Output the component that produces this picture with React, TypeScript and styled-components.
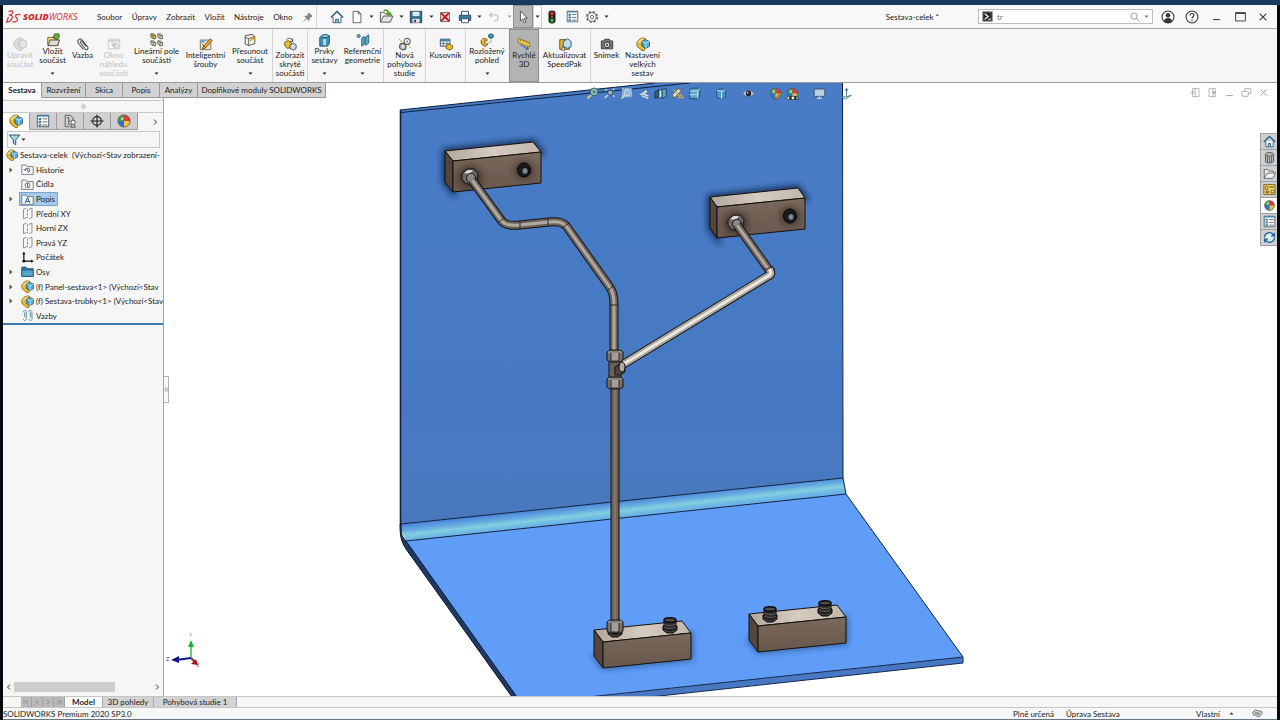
import React, { useState } from 'react';
import styled, { createGlobalStyle, css } from 'styled-components';

const Global = createGlobalStyle`
  *, *::before, *::after { box-sizing: border-box; }
  body { margin: 0; background: #05080c; }
  button, input { font: inherit; color: inherit; margin: 0; padding: 0; border: 0; background: none; }
  svg { display: block; flex: none; }
`;

const Shell = styled.div`
  min-height: 100vh;
  display: flex;
  flex-direction: column;
  padding: 0 3px;
  background: #05080c;
  color: #1c1c1c;
  font: 8px/10px Lato, 'Open Sans', sans-serif;
`;
const TopStrip = styled.div`
  height: 5px;
  margin: 0 -3px;
  background: #1b3a61;
`;

/* ---------- title bar ---------- */
const TitleBar = styled.header`
  height: 24px;
  padding-right: 3px;
  display: flex;
  align-items: stretch;
  background: #f8f8f8;
  border-bottom: 1px solid #a5a2a8;
`;
const Logo = styled.div`
  width: 90px;
  padding-left: 3px;
  display: flex;
  align-items: center;
  gap: 2px;
  color: #d0312d;
  font: italic 9px/12px 'Open Sans', sans-serif;
  b { font-weight: 800; }
`;
const MenuNav = styled.nav`
  width: 224px;
  padding: 1px 3px 0 4px;
  display: flex;
  align-items: center;
  justify-content: space-between;
  border-right: 1px solid #d4d4d4;
`;
const MenuButton = styled.button`
  white-space: nowrap;
`;
const QuickBar = styled.div`
  display: flex;
  padding-left: 10px;
`;
const QuickButton = styled.button<{ $w: number; $on?: boolean; $boxed?: boolean }>`
  width: ${(p) => p.$w}px;
  display: flex;
  align-items: center;
  justify-content: center;
  ${(p) => p.$on && css`background: #b4b4b4; border: 1px solid #8f8f8f;`}
  ${(p) => p.$boxed && css`background: #fff; border: 1px solid #ccc;`}
`;
const DocTitle = styled.div`
  flex: 1;
  padding: 1px 39px 0 0;
  display: flex;
  align-items: center;
  justify-content: flex-end;
`;
const SearchBox = styled.label`
  flex: 0 1 175px;
  height: 15px;
  margin-top: 4px;
  padding: 0 3px;
  display: flex;
  align-items: center;
  gap: 4px;
  background: #fff;
  border: 1px solid #bdbdbd;
`;
const SearchInput = styled.input`
  flex: 1;
  min-width: 0;
  outline: 0;
  color: #777;
`;
const WindowButtons = styled.div`
  display: flex;
  align-items: center;
  padding-left: 3px;
`;

/* ---------- ribbon ---------- */
const Ribbon = styled.div`
  height: 54px;
  display: flex;
  background: #f6f6f6;
  border-bottom: 1px solid #9d9a9f;
`;
const Tool = styled.button<{ $w: number; $sep?: boolean; $on?: boolean; $off?: boolean; $menu?: boolean }>`
  width: ${(p) => p.$w}px;
  padding-top: ${(p) => (p.$menu ? 4 : 8)}px;
  display: flex;
  flex-direction: column;
  align-items: center;
  white-space: nowrap;
  border-right: 1px solid ${(p) => (p.$sep ? '#d3d3d3' : 'transparent')};
  line-height: 9px;
  ${(p) => p.$off && css`color: #c0c0c0;`}
  ${(p) => p.$on && css`background: #b3b3b3; border: 1px solid #8e8e8e; padding-top: 7px;`}
`;
const ToolLabel = styled.span`
  white-space: pre-line;
  text-align: center;
`;
const ToolCaret = styled.span`
  margin-top: 7px;
`;

/* ---------- workspace ---------- */
const Workspace = styled.main`
  flex: 1;
  display: grid;
  grid-template-columns: 161px minmax(0, 1fr);
  grid-template-rows: 15px minmax(0, 1fr);
  background: #fff;
`;
const RibbonTabs = styled.div`
  grid-column: 1 / -1;
  grid-row: 1;
  z-index: 2;
  justify-self: start;
  display: flex;
`;
const RibbonTab = styled.button<{ $w: number; $on?: boolean }>`
  width: ${(p) => p.$w}px;
  white-space: nowrap;
  background: ${(p) => (p.$on ? '#fafafa' : '#d2d2d2')};
  border-right: 1px solid #999;
  border-bottom: 1px solid ${(p) => (p.$on ? '#fafafa' : '#999')};
  font-weight: ${(p) => (p.$on ? 700 : 400)};
`;
const Panel = styled.aside`
  grid-column: 1;
  grid-row: 2;
  display: flex;
  flex-direction: column;
  background: #f6f6f6;
  border-right: 1px solid #a3a3a3;
`;
const Grip = styled.div`
  height: 13px;
  margin-top: 2px;
  display: flex;
  align-items: center;
  justify-content: center;
  border-top: 1px solid #c9c9c9;
  border-bottom: 1px solid #c9c9c9;
`;
const PanelTabs = styled.div`
  height: 17px;
  display: flex;
`;
const PanelTab = styled.button<{ $on?: boolean }>`
  width: 27px;
  display: flex;
  align-items: center;
  justify-content: center;
  background: ${(p) => (p.$on ? '#fff' : '#cfcfcf')};
  border-right: 1px solid #9b9b9b;
  border-bottom: 1px solid ${(p) => (p.$on ? '#fff' : '#9b9b9b')};
`;
const PanelMore = styled.button`
  flex: 1;
  padding-left: 10px;
  display: flex;
  align-items: center;
  justify-content: center;
`;
const FilterBox = styled.label`
  height: 17px;
  margin: 1px 3px 0 4px;
  display: flex;
  align-items: center;
  border: 1px solid #c8c8c8;
  input { flex: 1; min-width: 0; outline: 0; }
`;
const Tree = styled.ul`
  height: 177px;
  margin: 0;
  padding: 0;
  list-style: none;
  display: grid;
  grid-template-rows: repeat(12, 1fr);
  border-bottom: 2px solid #3a7bb5;
`;
const TreeRow = styled.li<{ $root?: boolean }>`
  min-width: 0;
  display: flex;
  align-items: center;
  overflow: hidden;
  padding-left: ${(p) => (p.$root ? 1 : 4)}px;
`;
const Twisty = styled.span`
  width: 12px;
  flex: none;
  padding-left: 2px;
`;
const TreeItem = styled.button<{ $on?: boolean }>`
  height: 14px;
  padding: 0 2px 0 1px;
  display: flex;
  align-items: center;
  gap: 2px;
  white-space: pre;
  border: 1px solid ${(p) => (p.$on ? '#7ba5cb' : 'transparent')};
  background: ${(p) => (p.$on ? '#a5cbea' : 'none')};
`;
const PanelScroll = styled.div`
  height: 10px;
  margin-top: auto;
  margin-bottom: 4px;
  display: flex;
  align-items: center;
  gap: 3px;
  padding: 0 3px;
`;
const Track = styled.div`
  flex: 1;
  height: 10px;
`;
const Thumb = styled.div`
  width: 73%;
  height: 10px;
  background: #cdcdcd;
`;
const Viewport = styled.section`
  grid-column: 2;
  grid-row: 1 / -1;
  position: relative;
  min-height: 0;
  overflow: hidden;
  background: #fff;
`;
const Scene = styled.svg`
  width: 100%;
  height: auto;
`;
const HeadsUp = styled.div`
  position: absolute;
  top: 4px;
  left: 37.75%;
  display: flex;
  align-items: center;
`;
const HudButton = styled.button<{ $gap?: boolean }>`
  width: 17px;
  margin-left: ${(p) => (p.$gap ? 10 : 0)}px;
  display: flex;
  justify-content: center;
`;
const DocButtons = styled.div`
  position: absolute;
  top: 4px;
  right: 5px;
  display: flex;
`;
const TaskPane = styled.div`
  position: absolute;
  top: 50px;
  right: 0;
  width: 17px;
  border: 1px solid #a0a0a0;
  border-right: 0;
`;
const TaskTab = styled.button<{ $on?: boolean }>`
  width: 16px;
  height: 16px;
  display: flex;
  align-items: center;
  justify-content: center;
  background: ${(p) => (p.$on ? '#fff' : '#cdd0d3')};
  border-bottom: 1px solid #a0a0a0;
  &:last-child { border-bottom: 0; height: 15px; }
`;
const Splitter = styled.div`
  position: absolute;
  left: 0;
  top: 293px;
  width: 5px;
  height: 27px;
  display: flex;
  align-items: center;
  justify-content: center;
  border: 1px solid #b5b5b5;
  border-left: 0;
  background: #f8f8f8;
`;

/* ---------- footer ---------- */
const SheetTabs = styled.div`
  height: 12px;
  display: flex;
  background: #f6f6f6;
  border-top: 1px solid #c6c6c6;
  border-bottom: 1px solid #c6c6c6;
  padding-left: 18px;
`;
const StepButton = styled.button`
  width: 11px;
  display: flex;
  align-items: center;
  justify-content: center;
  background: #b9b9b9;
  border-right: 1px solid #a3a3a3;
`;
const SheetTab = styled.button<{ $w: number; $on?: boolean }>`
  width: ${(p) => p.$w}px;
  line-height: 9px;
  white-space: nowrap;
  background: ${(p) => (p.$on ? '#fff' : '#d3d3d3')};
  border-right: 1px solid #aaa;
  font-weight: ${(p) => (p.$on ? 700 : 400)};
`;
const StatusBar = styled.footer`
  height: 12px;
  display: flex;
  align-items: center;
  background: #f6f7f8;
  border-bottom: 1px solid #6a7686;
`;
const StatusText = styled.span<{ $w?: number }>`
  ${(p) => (p.$w ? css`width: ${p.$w}px;` : css`flex: 1;`)}
`;

/* ---------- icons ---------- */
const Svg = ({ s = 14, children }: { s?: number; children: React.ReactNode }) => (
  <svg width={s} height={s} viewBox="0 0 16 16" fill="none" aria-hidden="true">{children}</svg>
);
const Caret = ({ c = '#222' }: { c?: string }) => (
  <svg width="5" height="3" viewBox="0 0 5 3" aria-hidden="true"><path d="M0.5 0.5h4L2.5 2.8z" fill={c} /></svg>
);
const Chevron = ({ left }: { left?: boolean }) => (
  <svg width="5" height="8" viewBox="0 0 5 8" fill="none" stroke="#333" aria-hidden="true">
    <path d={left ? 'M4 1.5L1.5 4L4 6.5' : 'M1 1.5L3.5 4L1 6.5'} />
  </svg>
);
const Dot = () => (
  <svg width="5" height="5" viewBox="0 0 5 5" aria-hidden="true"><circle cx="2.5" cy="2.5" r="1.6" fill="#fff" stroke="#888" strokeWidth=".8" /></svg>
);
const PartShapes = () => (
  <>
    <path d="M.8 6.500L4 2.500 8 1l3 1-3.500 2.500L6 9.500l4 3.500v2L7 15.500 1.500 11z" fill="#e9bd33" stroke="#7a5a10" strokeWidth=".9" />
    <path d="M2.500 6.500l3-3L9 2" stroke="#fff0a8" strokeWidth="1.200" />
    <path d="M7 5l4-2 4.500 2v5.500L11.500 13 7 10.500z" fill="#4fa9d6" stroke="#1c5878" strokeWidth=".9" />
    <path d="M7 5l4.300 1.800L15.500 5M11.300 6.800V13" stroke="#d9f1fb" strokeWidth=".9" />
  </>
);
const Folder = () => <path d="M1 2.5h5l1.5 2H15v9.500H1z" fill="#fbfbfb" stroke="#5b6670" />;
const Ball = ({ r = 6 }: { r?: number }) => (
  <>
    <circle cx="8" cy="8" r={r} fill="#3273d6" />
    <path d={`M8 8V${8 - r}A${r} ${r} 0 0 0 ${8 - r} 8z`} fill="#3da646" />
    <path d={`M8 8V${8 - r}A${r} ${r} 0 0 1 ${8 + r} 8z`} fill="#e03c31" />
    <path d={`M8 8H${8 + r}A${r} ${r} 0 0 1 8 ${8 + r}z`} fill="#f0c53a" />
    <circle cx="8" cy="8" r={r} stroke="#5b4a3c" strokeWidth=".8" />
    <circle cx="6" cy="5.500" r="1.500" fill="#fff" opacity=".6" />
  </>
);
const art: Record<string, React.ReactNode> = {
  home: <><path d="M3.500 8v6.500h9V8" fill="#fff" stroke="#234a60" /><path d="M1 8.500L8 1.800l7 6.700" stroke="#1f5b7c" strokeWidth="1.600" /><path d="M6.500 14.500v-4h3v4" fill="#8cc6dd" stroke="#234a60" /></>,
  page: <path d="M3.500 1.500h6l3 3v10h-9zM9.500 1.500v3h3" fill="#fff" stroke="#555" />,
  open: <><path d="M1.500 14V3.500h4l1.500 2h6V8" fill="#f5f0df" stroke="#555" /><path d="M1.500 14L5 7.500h10L12 14z" fill="#e4e4e4" stroke="#555" /><path d="M5 1.500c3-1 5 0 5.500 3.500M8 4l2.600 2.500L12.500 3.600" stroke="#4b9a25" strokeWidth="1.700" /></>,
  save: <><path d="M1.500 1.500h13v13h-13z" fill="#2f6f8c" stroke="#1c3f50" /><path d="M4 2h8v5H4z" fill="#dcebf1" /><path d="M4 10h8v4.500H4z" fill="#e5e5e5" /><path d="M6 11h2v3H6z" fill="#333" /></>,
  del: <><path d="M2 2h12v12H2z" fill="#d9d9d9" stroke="#555" /><path d="M2.500 2.500l11 11M13.500 2.500l-11 11" stroke="#c81919" strokeWidth="2.400" /></>,
  print: <><path d="M4 6V1.500h8V6" fill="#fff" stroke="#345" /><path d="M1.500 6h13v6h-13z" fill="#3c7d9b" stroke="#1d4457" /><path d="M4 10h8v4.500H4z" fill="#fff" stroke="#345" /></>,
  undo: <path d="M5 3L2 6l3 3M2 6h7a4 3.800 0 0 1 0 7.500H7" stroke="#c6c6c6" strokeWidth="1.600" />,
  cursor: <path d="M5 1l8 8.500H9.300l2 4.500-1.800.8-2-4.500L5 12.500z" fill="#fff" stroke="#444" />,
  traffic: <><rect x="4" y=".500" width="8" height="15" rx="3.500" fill="#222" /><circle cx="8" cy="4" r="2.200" fill="#d8342a" /><circle cx="8" cy="8" r="1.500" fill="#6b5a20" /><circle cx="8" cy="12" r="2.200" fill="#33a447" /></>,
  list: <><path d="M1.500 1.500h13v13h-13z" fill="#fff" stroke="#3b5567" /><path d="M1.500 1.500h13v1.500h-13z" fill="#3a7fa5" /><path d="M3 4.500h3v2.500H3zM3 8h3v2.500H3zM3 11.500h3v2H3z" fill="#3a7fa5" /><path d="M7.500 5.500H13M7.500 9H13M7.500 12.500H13" stroke="#555" /></>,
  gear: <><circle cx="8" cy="8" r="6" stroke="#666" strokeWidth="1.800" strokeDasharray="2.800 1.912" /><circle cx="8" cy="8" r="4.900" fill="#f8f8f8" stroke="#666" /><circle cx="8" cy="8" r="1.900" stroke="#666" /></>,
  pin: <path d="M10 1.500l4.500 4.500-1.500.8-2.500 2.400-.5 3L4 6.500l3-.5L9.300 3.300zM6.500 9.500L2 14" fill="#888" stroke="#777" strokeWidth="1.200" />,
  user: <><circle cx="8" cy="8" r="6.800" fill="#fff" stroke="#333" strokeWidth="1.200" /><circle cx="8" cy="6" r="2.600" fill="#333" /><path d="M3.500 13c0-5 9-5 9 0-2 2.300-7 2.300-9 0z" fill="#333" /></>,
  help: <><circle cx="8" cy="8" r="6.800" stroke="#333" strokeWidth="1.200" /><path d="M5.800 6.300c0-3 4.500-3 4.500-.2 0 1.700-2.300 1.700-2.300 3.600M8 11v1.600" stroke="#333" strokeWidth="1.300" /></>,
  min: <path d="M3 12.500h10" stroke="#333" strokeWidth="1.500" />,
  max: <><path d="M2 3.500h12v10H2z" stroke="#333" strokeWidth="1.100" /><path d="M2 3.800h12" stroke="#333" strokeWidth="1.800" /></>,
  close: <path d="M3.500 3.500l9 9M12.500 3.500l-9 9" stroke="#333" strokeWidth="1.400" />,
  prompt: <><path d="M1 1h14v14H1z" fill="#2a2a2a" stroke="#999" strokeWidth="1.500" /><path d="M4 4l5 4-5 4M9 12h4" stroke="#fff" strokeWidth="1.600" /></>,
  lens: <path d="M10.300 10.300L15 15M6.500 11.500a5 5 0 1 1 0-10 5 5 0 0 1 0 10z" stroke="#888" strokeWidth="1.300" />,
  part: <PartShapes />,
  partOff: <><path d="M.8 6.500L4 2.500 8 1l3 1-3.500 2.500L6 9.500l4 3.500v2L7 15.500 1.500 11z" fill="#dcdcdc" stroke="#c4c4c4" /><path d="M7 5l4-2 4.500 2v5.500L11.500 13 7 10.500z" fill="#e6e6e6" stroke="#bdbdbd" /></>,
  insert: <><path d="M2 5h7l1 2h4v7H2z" fill="#f0dc82" stroke="#6b5a1a" /><path d="M2.500 14.500l2-6.500h11l-2.500 6.500z" fill="#dcdccf" stroke="#444" /><path d="M8 5l2-4h5v4l-3 2z" fill="#62b544" stroke="#2c6018" /></>,
  clip: <path d="M2 4.500c1.500-3 4-2.500 5-1l6.500 8c1.200 2-1.500 4-3 2.200L5 6.500C4 5 6 3.800 7 5l4.500 5.800M2 4.500c-.5 1.500 0 2 1 3.200l5.500 6.500" stroke="#555" strokeWidth="1.200" />,
  preview: <><path d="M1.500 2.500h13v11h-13z" stroke="#c6c6c6" /><path d="M1.500 4.500h13" stroke="#c6c6c6" strokeWidth="1.500" /><path d="M4 7l5-1 2 4-4 2z" fill="#d4d4d4" /><circle cx="10.500" cy="10" r="2.500" stroke="#bbb" /></>,
  pattern: <>{[[1, 1], [9, 1], [1, 9], [9, 9]].map(([x, y], i) => <g key={i}><path d={`M${x} ${y}h3l2.500 2v3.500h-3l-2.500-2z`} fill={i ? '#e2e2cf' : '#e8c53c'} stroke="#4a4a3a" strokeWidth=".9" /><path d={`M${x} ${y}l2.500 2h3M${x + 2.5} ${y + 2}v3.500`} stroke="#4a4a3a" strokeWidth=".8" /></g>)}</>,
  smart: <><path d="M1.500 3.500h12v11h-12z" fill="#f3e6bd" stroke="#666" /><path d="M1.500 3.500h5v3h-5z" fill="#6ea8c7" /><path d="M4 12l9-10 2 2-8 9-3 1z" fill="#e6a92e" stroke="#6b4a10" strokeWidth=".9" /><path d="M4 8l3 4" stroke="#444" /></>,
  move: <><path d="M2.500 3l8-1.500 3 2.500v8l-7 2.500-4-2z" fill="#f2f0e6" stroke="#444" /><path d="M2.500 5l4 1.500 7-2.500M6.500 6.500v8" stroke="#555" /><path d="M8 9l5-4M13 5v3M13 5h-3" stroke="#cf8b12" strokeWidth="1.400" /></>,
  hidden: <><path d="M4 3c3-3 7-1 7 1.500M11 2v3H8" stroke="#333" /><path d="M2 6l4-2 4 3-1 5-4 1-3-3z" fill="#e8b92e" stroke="#6d5010" /><path d="M8 9l4-2 3 2v4l-3 2-4-2z" fill="#d4dbe2" stroke="#445" /></>,
  feature: <><path d="M2 5l3-2h8v9l-2 3H2z" fill="#3f8fb8" stroke="#1d516d" /><path d="M6 7h3v7H6z" fill="#b9e0f0" /><ellipse cx="8" cy="3.500" rx="4" ry="1.800" fill="#91c8e0" stroke="#1d516d" /></>,
  geometry: <><circle cx="3" cy="3.500" r="1.800" fill="#63b2d8" stroke="#205d7e" /><path d="M6.500 6l3-2v9l-3 2zM11 4.500l3.500-2.500v9.500L11 14z" fill="#5fadd3" stroke="#205d7e" /></>,
  motion: <><circle cx="10.500" cy="5" r="3.500" fill="#f6f6f6" stroke="#666" strokeWidth="1.300" /><circle cx="10.500" cy="5" r="1" fill="#777" /><circle cx="5.500" cy="11" r="3.700" fill="#bbb" stroke="#555" strokeWidth="1.300" /><circle cx="5.500" cy="11" r="1.200" fill="#fff" /><path d="M1 2l4 4M12 10l3 3" stroke="#bb8a30" /></>,
  bom: <><path d="M1.500 2.500h11v8h-11z" fill="#eef7fb" stroke="#345" /><path d="M1.500 2.500h11v2.500h-11z" fill="#3d82a8" /><path d="M5 5v5.500M9 5v5.500M2 7.500h10" stroke="#567" strokeWidth=".9" /><path d="M8 10l4-2 3.500 2v3L12 15l-4-2z" fill="#e8b92e" stroke="#7a5a10" /></>,
  explode: <><path d="M1 9l3-3 4 1v2H5.500v3l3.500 1-3 2.500-4-2.500z" fill="#e8b92e" stroke="#7a5a10" /><path d="M10 2l2-1 3 1v3l-2 1-3-1z" fill="#4c93c4" stroke="#1b4c6d" /><path d="M12.500 6v4.500L8 12" stroke="#777" strokeDasharray="1.500 1" /></>,
  instant: <><path d="M1.500 1.500l13 5v5l-13-5z" fill="#f0cd54" stroke="#80620f" strokeWidth=".8" /><path d="M4 3v2M7 4v2M10 5v2M12.500 6v2" stroke="#80620f" strokeWidth=".8" /><path d="M4 9l9 5M13 14l-3.500-.2M13 14l-1.500-3" stroke="#3979a0" strokeWidth="1.300" /></>,
  speedpak: <><path d="M2 3h7v4l4 1v6H2z" fill="#e8b92e" stroke="#5e4709" /><path d="M6 5l5-3 4 3v6l-4 2-5-2z" fill="#b9dff0" stroke="#1c5878" /><path d="M4 15l2-5 2 5z" fill="#fff" stroke="#333" strokeWidth=".8" /></>,
  camera: <><path d="M1.500 4.500h3l1-2h5l1 2h3v9h-13z" fill="#777" stroke="#333" /><circle cx="8" cy="9" r="3.300" fill="#ddd" stroke="#222" /><circle cx="8" cy="9" r="1.300" fill="#444" /></>,
  tree: <><path d="M2.500 1.500h6l3 3v3M2.500 1.500v13h5" stroke="#555" /><path d="M4.500 4h2v8h2M6.500 8h2" stroke="#555" /><circle cx="11.500" cy="9.500" r="2.500" fill="#fff" stroke="#444" /><path d="M10 12l-1 3h5l-1-3" stroke="#444" /></>,
  target: <><circle cx="8" cy="8" r="5" stroke="#222" strokeWidth="1.300" /><path d="M8 .500v15M.500 8h15" stroke="#222" strokeWidth="1.300" /></>,
  ball: <Ball />,
  bigBall: <Ball r={7} />,
  filter: <path d="M1.500 2.500h13L9.500 8.500v6l-3-2v-4z" fill="#a8d3e6" stroke="#2c5a72" strokeWidth="1.200" />,
  history: <><Folder /><path d="M5 9a3 2.500 0 1 1 3 2.500M5 9L3.500 7.500M5 9l1.700-1M8 8v1.500h1.500" stroke="#345" /></>,
  sensor: <><Folder /><circle cx="8" cy="9" r="3" fill="#fff" stroke="#555" /><path d="M8 6.500v3l1 1" stroke="#c33" strokeWidth="1.300" /></>,
  note: <><Folder /><path d="M5 12.500l3-7 3 7M6 10.300h4" stroke="#23577a" strokeWidth="1.200" /></>,
  plane: <><path d="M6.500 1.500L3 3v11.500l4-1.500M9.500 3l4-1.500V13L10 14.500" stroke="#777" /><path d="M8 3v11" stroke="#777" strokeDasharray="3 1.500" /></>,
  origin: <><path d="M3.500 2v10.500H14" stroke="#111" strokeWidth="1.500" /><path d="M1.500 4l2-3 2 3zM12.500 10.500l3 2-3 2z" fill="#111" /><circle cx="3.500" cy="12.500" r="1.800" fill="#111" /></>,
  osy: <><path d="M1 2.500h5l1.500 2H15v9.500H1z" fill="#2c7ca5" stroke="#1b536f" /><path d="M1 6h14v8H1z" fill="#55a8cf" stroke="#1b536f" /></>,
  mates: <path d="M2.500 4c0-3 4-3 4 0v8c0 3-3.500 3-3.500 0M4.500 4v6M9.500 4c0-3 4-3 4 0v8c0 3-3.500 3-3.500 0M11.500 4v6" stroke="#5b8aa5" strokeWidth="1.200" />,
  dockL: <><path d="M4 2h9v12H4z" stroke="#999" /><path d="M7.500 2v12M2 8h4M4.500 5.500L2 8l2.500 2.500" stroke="#999" /></>,
  dockR: <><path d="M3 2h9v12H3z" stroke="#999" /><path d="M8.500 2v12" stroke="#999" /><path d="M9 5.500L13 8l-4 2.500z" fill="#999" /></>,
  minG: <path d="M3 12.500h10" stroke="#999" strokeWidth="1.300" />,
  restore: <path d="M5.500 6V2.500h9v7H11M1.500 6.500h9v7h-9z" stroke="#999" strokeWidth="1.100" />,
  closeG: <path d="M3.500 3.500l9 9M12.500 3.500l-9 9" stroke="#999" strokeWidth="1.200" />,
  books: <><path d="M3 4.500c0-3.500 10-3.500 10 0v8c0 3-10 3-10 0z" fill="#b9b9b9" stroke="#444" /><path d="M3 4.500c0 2 10 2 10 0M5.500 6v8M8 6.500V14.500M10.500 6v8" stroke="#555" /></>,
  folderG: <path d="M1.500 14V3h4l1.500 2h6v2.500M1.500 14L5 7.500h10.500L12 14z" fill="#f1f1f1" stroke="#555" />,
  palette: <><path d="M1 2h14v12H1z" fill="#f0cf61" stroke="#6a5314" /><path d="M3 4.500h3v3H3zM10 9h3.500v3H10z" fill="#fff" stroke="#6a5314" /><path d="M8 5h6M3 11h5M5 9v4" stroke="#6a5314" strokeWidth="1.300" /></>,
  sync: <><circle cx="8" cy="8" r="5.500" fill="#d7eefb" /><path d="M2 8c0-6 8-8 11-3M14 2v4h-4M14 8c0 6-8 8-11 3M2 14v-4h4" stroke="#1f5f93" strokeWidth="1.600" /></>,
  zoomFit: <><path d="M7 9.500L1.500 14" stroke="#d0c68c" strokeWidth="2.600" /><circle cx="10" cy="6" r="4.800" fill="#8fc3c6" stroke="#234758" /><path d="M7.500 6h5M10 3.800v4.400" stroke="#3d6a30" /></>,
  zoomArea: <><circle cx="9" cy="7" r="3.200" fill="#9ab8d4" stroke="#1d2c48" /><path d="M6.500 9.500L2 13.500M3 3l2 1.500M14 2l-2 2M14 12l-2-1.500" stroke="#d9ddce" strokeWidth="1.600" /></>,
  zoomPrev: <><path d="M3 2h11v10H3z" fill="#7ba1d4" stroke="#cdd8e8" strokeDasharray="2 1" /><circle cx="9" cy="7" r="3.800" fill="#8fbae0" stroke="#dce6ee" /><path d="M6 10l-4 4" stroke="#dcd9c0" strokeWidth="2" /></>,
  knife: <><path d="M1.500 9.500L13 2v5L5 11z" fill="#c6dbe8" stroke="#33506f" strokeWidth=".8" /><path d="M6 11l8 3M8 9l6 2" stroke="#d9e0e6" strokeWidth="1.800" /></>,
  section: <><path d="M1 6l5-3v9l-5 2z" fill="#31607e" stroke="#14324a" /><path d="M6 4l4-1v10l-4 1z" fill="#d6e4ea" stroke="#14324a" /><path d="M10 3l5-1v10l-5 2z" fill="#5aa9cf" stroke="#14324a" /></>,
  dyn: <><path d="M2 9l7-7 4 2-8 9-3-1z" fill="#d9dacb" stroke="#58553a" /><path d="M3 3l10 11M9 13h6L12 9z" stroke="#c9a258" strokeWidth="1.400" /></>,
  cube: <><path d="M2 5l3-3.500h9.500V11L12 14.500H2z" fill="#58a7cd" stroke="#153b56" /><path d="M2 5h10v9.500M12 5l2.500-3.500M2 9.500h10" stroke="#cfeaf5" /></>,
  shade: <><path d="M2 4l5-2 6 1.500v9L8 15l-6-2z" fill="#4d9ac4" stroke="#1b4a6c" /><path d="M2 4l6 1.500 5-2M8 5.500V15" stroke="#d6eef8" /></>,
  eye: <><path d="M1 8c3-5 11-5 14 0-3 5-11 5-14 0z" fill="#c9ced6" stroke="#5a6578" /><circle cx="8" cy="8" r="3.300" fill="#1b2230" /><circle cx="7" cy="7" r="1" fill="#fff" /></>,
  look: <><Ball r={6.500} /><path d="M8 14.500l5.500-8 2 1.500-5.500 7.500z" fill="#d9a441" stroke="#503b12" strokeWidth=".8" /></>,
  scene: <><Ball r={6.500} /><path d="M2 11.500h12l1 4H1z" fill="#fff" stroke="#222" strokeWidth=".8" /><path d="M4 11.500h3v4H4zM10 11.500h3v4h-3z" fill="#222" /></>,
  monitor: <><path d="M1.500 2.500h13v9h-13z" fill="#b9cde4" stroke="#33496a" /><path d="M5 14h6M8 11.500V14" stroke="#c9d4e0" strokeWidth="1.500" /></>,
  axis: <><path d="M8 3v9M8 12l6-2M8 12l-6 .5 5 2.500 7-5" stroke="#4f7f90" strokeWidth="1.200" /><path d="M5.500 4.500L8 1l2.500 3.500z" fill="#4f7f90" /></>,
  tag: <><path d="M1 6l4-3 9 2 1 3-5 5-8-3z" fill="#ddd" stroke="#444" /><path d="M4 6l8 2M4 8l7 2" stroke="#555" /></>,
};
const Icon = ({ n, s }: { n: string; s?: number }) => <Svg s={s}>{art[n]}</Svg>;

const LogoMark = () => (
  <svg width="15" height="14" viewBox="0 0 30 28" fill="none" stroke="#d0312d" strokeWidth="2.400" aria-hidden="true">
    <path d="M5 3.500C12 .500 16 2 13 6c-1.500 2-4 3.500-7 4.500 6-1 8.500 2 6 6.500-2 4-6 7-11 7.500L5 14" />
    <path d="M29 9.500c-7-2-12 1-9 5 3 3 5 6 0 8.500-2 1-5 1-7 .5" />
  </svg>
);

/* ---------- model drawing ---------- */
type P = [number, number];
const pts = (a: P[]) => a.map((p) => p.join(',')).join(' ');
const Block = ({ x, y, d, h, dx, wall }: { x: number; y: number; d: P; h: number; dx: P; wall?: boolean }) => {
  const a: P = [x, y];
  const b: P = [x + dx[0], y + dx[1]];
  const c: P = [b[0] + d[0], b[1] + d[1]];
  const e: P = [x + d[0], y + d[1]];
  const dn = (p: P): P => [p[0], p[1] + h];
  return (
    <g>
      <polygon points={pts(wall ? [a, b, c, e, dn(e), dn(a)] : [dn(a), dn(e), dn(c), c])} fill="#0b1c3a" stroke="#0b1c3a" strokeWidth={wall ? 5 : 3} filter="url(#soft)" opacity={wall ? 0.8 : 0.5} />
      <g stroke="#14100d" strokeWidth="1" strokeLinejoin="round">
        <polygon points={pts([a, b, c, e])} fill="url(#blockTop)" />
        <polygon points={pts([a, e, dn(e), dn(a)])} fill="#54463d" />
        <polygon points={pts([e, c, dn(c), dn(e)])} fill="url(#blockFront)" />
      </g>
    </g>
  );
};
const Pipe = ({ d, w = 8, glow = '#c6c0b9', base = '#6e645c' }: { d: string; w?: number; glow?: string; base?: string }) => (
  <g fill="none" strokeLinejoin="round">
    <path d={d} stroke="#15120f" strokeWidth={w + 1} />
    <path d={d} stroke={base} strokeWidth={w - 1} />
    <path d={d} stroke={glow} strokeWidth={w / 2 - 1} opacity=".75" />
  </g>
);
const WallPort = ({ x, y }: { x: number; y: number }) => (
  <g>
    <ellipse cx={x} cy={y} rx="10" ry="9" fill="#1b1511" filter="url(#soft)" opacity=".55" />
    <ellipse cx={x} cy={y} rx="6.500" ry="7" fill="#1d1c1c" stroke="#000" />
    <ellipse cx={x + 1} cy={y + 1} rx="3.600" ry="4" fill="#5b6066" stroke="#000" />
    <ellipse cx={x + 1} cy={y + 1} rx="1.600" ry="2" fill="#8b9096" />
  </g>
);
const WallNut = ({ x, y }: { x: number; y: number }) => (
  <g stroke="#171411">
    <ellipse cx={x} cy={y} rx="12" ry="11" fill="#1b1511" stroke="none" filter="url(#soft)" opacity=".55" />
    <path d={`M${x - 8} ${y - 3}l5-5 7 0 4 5-1 7-5 4-7-2-3-4z`} fill="#6d6b6a" />
    <path d={`M${x - 6} ${y - 4}l4-3 5 0 -3 4z`} fill="#d8d8d8" stroke="none" />
    <ellipse cx={x + 1} cy={y + 1} rx="4.500" ry="4.800" fill="#8a8886" />
  </g>
);
const FloorPort = ({ x, y }: { x: number; y: number }) => (
  <g stroke="#0a0a0a">
    <path d={`M${x - 7} ${y + 1}v4l4 3h6l4-3v-4z`} fill="#3f3b38" />
    <path d={`M${x - 6} ${y - 5}v8c3 3 9 3 12 0v-8z`} fill="#2d2b2a" />
    <path d={`M${x - 6} ${y - 1}c3 2 9 2 12 0M${x - 6} ${y + 2}c3 2 9 2 12 0`} stroke="#777" fill="none" strokeWidth=".7" />
    <ellipse cx={x} cy={y - 5} rx="6" ry="2.300" fill="#4b4a49" strokeWidth="1.400" />
  </g>
);
const Hex = ({ x, y, h, w = 16 }: { x: number; y: number; h: number; w?: number }) => (
  <g stroke="#151210">
    <path d={`M${x - w / 2} ${y + 2}l3-2h${w - 6}l3 2v${h - 4}l-3 2h-${w - 6}l-3-2z`} fill="#77716c" />
    <path d={`M${x - w / 4} ${y + 2}h${w / 2}v${h - 3}h-${w / 2}z`} fill="#a39e99" strokeWidth=".8" />
    <path d={`M${x - w / 2 + 1} ${y + 2}h${w - 2}`} stroke="#d0ccc8" strokeWidth=".8" />
  </g>
);

const Model = () => (
  <Scene viewBox="164 83 1113 613" role="img" aria-label="Sestava-celek">
    <defs>
      <filter id="soft" x="-40%" y="-40%" width="180%" height="180%"><feGaussianBlur stdDeviation="3" /></filter>
      <linearGradient id="wall" x1="0" y1="0" x2="0" y2="1"><stop offset="0" stopColor="#487cc6" /><stop offset=".75" stopColor="#4779c3" /><stop offset="1" stopColor="#4a78bd" /></linearGradient>
      <linearGradient id="bend" gradientUnits="userSpaceOnUse" x1="620" y1="501" x2="622" y2="519"><stop offset="0" stopColor="#4d87dc" /><stop offset=".3" stopColor="#65a9e2" /><stop offset=".55" stopColor="#82cfdf" /><stop offset=".8" stopColor="#6cb6e4" /><stop offset="1" stopColor="#66aaf0" /></linearGradient>
      <linearGradient id="blockTop"><stop offset="0" stopColor="#b3a79c" /><stop offset=".5" stopColor="#d6cbc0" /><stop offset="1" stopColor="#c2b6ab" /></linearGradient>
      <linearGradient id="blockFront" x1="0" y1="0" x2="0" y2="1"><stop offset="0" stopColor="#7a695d" /><stop offset="1" stopColor="#67574c" /></linearGradient>
    </defs>
    <path d="M400 110L655 83H842L843 478L401 524z" fill="url(#wall)" />
    <path d="M401 524L843 478L846 494L406 541L401 530z" fill="url(#bend)" />
    <path d="M406 541L846 494L963 657L588 697H517z" fill="#5f9df8" />
    <path d="M588 697L963 657V663L650 697z" fill="#4878c4" stroke="#14284a" />
    <path d="M401 524C401 536 402 536 406 541L517 697H512L406 549C401 541 400 536 400 524z" fill="#1b3a68" stroke="#0d1626" />
    <g fill="none" stroke="#10203c">
      <path d="M400 110L655 83M401 112.500L690 83" />
      <path d="M400.500 110V524" strokeWidth="1.600" />
      <path d="M842.500 83L843 478L846 494L963 657M401 524L843 478M406 541L846 494" />
    </g>

    <Block wall x={445} y={151} dx={[88, -9]} d={[8, 10]} h={31} />
    <Block wall x={710} y={197} dx={[88, -9]} d={[7, 10]} h={31} />
    <Block x={594} y={630} dx={[88, -9]} d={[9, 12]} h={26} />
    <Block x={749} y={614} dx={[88, -9]} d={[9, 12]} h={26} />

    <WallPort x={524} y={170} />
    <WallPort x={790} y={216} />
    <WallNut x={470} y={177} />
    <WallNut x={736} y={223} />

    <Pipe d="M472 180L501 220C504 225 510 226 520 225L549 222C558 221 563 222 567 227L609 286C613 291 614 296 614 304V352" />
    <Pipe d="M737 225L769 270" />
    <Pipe d="M769 269C772 272 771 275 768 276L622 365" glow="#fffdf8" base="#aaa49c" />
    <Pipe d="M615 386V624" glow="#8a7c72" base="#6b5d53" />
    <path d="M499 222l6-5M520 221v8M548 218v8M562 228l7-5M607 291l6-5M610 305h8M764 270l8-3" stroke="#221c17" strokeWidth=".9" />

    <path d="M609 361h12v18h-12z" fill="#6d6259" stroke="#15120f" />
    <path d="M615 367l6-4 4 3v6l-5 3h-5z" fill="#4a4440" stroke="#15120f" />
    <ellipse cx="622" cy="367" rx="3" ry="5" fill="#b0aaa3" stroke="#15120f" />
    <Hex x={615} y={350} h={12} />
    <Hex x={615} y={377} h={12} />
    <FloorPort x={615} y={629} />
    <Hex x={615} y={620} h={13} />
    <FloorPort x={670} y={625} />
    <FloorPort x={770} y={614} />
    <FloorPort x={825} y={608} />

    <g strokeWidth="1.600">
      <path d="M191 657V645" stroke="#3fc24a" /><path d="M188 647l3-7 3 7z" fill="#1fae2c" />
      <path d="M191 658L176 660" stroke="#12128a" strokeWidth="2" /><path d="M179 656l-8 4 8 3z" fill="#12128a" />
      <path d="M191 658l4 4" stroke="#a51616" strokeWidth="2" /><path d="M191 664l7 1-2-6z" fill="#a51616" />
    </g>
    <g fontFamily="'Open Sans', sans-serif" fontSize="6">
      <text x="189" y="637" fill="#54b85c">Y</text>
      <text x="166" y="661" fill="#12128a">Z</text>
      <text x="196" y="667" fill="#a51616">X</text>
    </g>
  </Scene>
);

/* ---------- data ---------- */
const menus = ['Soubor', 'Úpravy', 'Zobrazit', 'Vložit', 'Nástroje', 'Okno'];
type Quick = { n?: string; w: number; label: string; on?: boolean; boxed?: boolean; dim?: boolean; s?: number };
const quick: Quick[] = [
  { n: 'home', w: 20, label: 'Domů' }, { n: 'page', w: 20, label: 'Nový' }, { w: 8, label: 'Nový – možnosti' },
  { n: 'open', w: 22, label: 'Otevřít', s: 15 }, { w: 8, label: 'Otevřít – možnosti' },
  { n: 'save', w: 22, label: 'Uložit' }, { w: 8, label: 'Uložit – možnosti' },
  { n: 'del', w: 20, label: 'Zavřít', s: 12 }, { n: 'print', w: 20, label: 'Tisk' }, { w: 8, label: 'Tisk – možnosti' },
  { n: 'undo', w: 22, label: 'Zpět', s: 13 }, { w: 8, label: 'Zpět – možnosti', dim: true },
  { n: 'cursor', w: 20, label: 'Vybrat', on: true }, { w: 9, label: 'Vybrat – možnosti', boxed: true },
  { n: 'traffic', w: 20, label: 'Přestavět' }, { n: 'list', w: 20, label: 'Vlastnosti', s: 13 },
  { n: 'gear', w: 20, label: 'Možnosti' }, { w: 8, label: 'Další možnosti' },
];
type T = { t: string; n: string; w: number; sep?: boolean; menu?: boolean; on?: boolean; off?: boolean };
const tools: T[] = [
  { t: 'Upravit\nsoučást', n: 'partOff', w: 35, off: true },
  { t: 'Vložit\nsoučást', n: 'insert', w: 30, menu: true },
  { t: 'Vazba', n: 'clip', w: 30 },
  { t: 'Okno\nnáhledu\nsoučásti', n: 'preview', w: 32, off: true },
  { t: 'Lineární pole\nsoučásti', n: 'pattern', w: 54, menu: true },
  { t: 'Inteligentní\nšrouby', n: 'smart', w: 44 },
  { t: 'Přesunout\nsoučást', n: 'move', w: 45, menu: true, sep: true },
  { t: 'Zobrazit\nskryté\nsoučásti', n: 'hidden', w: 35, sep: true },
  { t: 'Prvky\nsestavy', n: 'feature', w: 34, menu: true },
  { t: 'Referenční\ngeometrie', n: 'geometry', w: 42, menu: true, sep: true },
  { t: 'Nová\npohybová\nstudie', n: 'motion', w: 42, sep: true },
  { t: 'Kusovník', n: 'bom', w: 40, sep: true },
  { t: 'Rozložený\npohled', n: 'explode', w: 43, menu: true },
  { t: 'Rychlé\n3D', n: 'instant', w: 30, on: true },
  { t: 'Aktualizovat\nSpeedPak', n: 'speedpak', w: 52, sep: true },
  { t: 'Snímek', n: 'camera', w: 32 },
  { t: 'Nastavení\nvelkých\nsestav', n: 'part', w: 40 },
];
const ribbonTabs: [string, number][] = [['Sestava', 39], ['Rozvržení', 44], ['Skica', 37], ['Popis', 37], ['Analýzy', 38], ['Doplňkové moduly SOLIDWORKS', 128]];
const treeRows: { t: string; n: string; exp?: boolean; on?: boolean }[] = [
  { t: 'Historie', n: 'history', exp: true }, { t: 'Čidla', n: 'sensor' }, { t: 'Popis', n: 'note', exp: true, on: true },
  { t: 'Přední XY', n: 'plane' }, { t: 'Horní ZX', n: 'plane' }, { t: 'Pravá YZ', n: 'plane' }, { t: 'Počátek', n: 'origin' },
  { t: 'Osy', n: 'osy', exp: true }, { t: '(f) Panel-sestava<1> (Výchozí<Stav', n: 'part', exp: true },
  { t: '(f) Sestava-trubky<1> (Výchozí<Stav', n: 'part', exp: true }, { t: 'Vazby', n: 'mates' },
];
const hud: [string, string, boolean?][] = [
  ['zoomFit', 'Na celou obrazovku'], ['zoomArea', 'Lupa'], ['zoomPrev', 'Předchozí pohled'], ['knife', 'Řez'],
  ['section', 'Řez modelem'], ['dyn', 'Poznámky'], ['cube', 'Orientace'], ['shade', 'Styl zobrazení', true],
  ['eye', 'Skrýt', true], ['look', 'Vzhled', true], ['scene', 'Scéna'], ['monitor', 'Nastavení pohledu', true], ['axis', 'Osa', true],
];

export default function App() {
  const [query, setQuery] = useState('tr');
  const [filter, setFilter] = useState('');
  return (
    <Shell>
      <Global />
      <TopStrip />
      <TitleBar>
        <Logo><LogoMark /><span><b>SOLID</b>WORKS</span></Logo>
        <MenuNav>
          {menus.map((m) => <MenuButton key={m}>{m}</MenuButton>)}
          <MenuButton aria-label="Připnout"><Icon n="pin" s={11} /></MenuButton>
        </MenuNav>
        <QuickBar>
          {quick.map((q) => (
            <QuickButton key={q.label} aria-label={q.label} $w={q.w} $on={q.on} $boxed={q.boxed}>
              {q.n ? <Icon n={q.n} s={q.s} /> : <Caret c={q.dim ? '#999' : undefined} />}
            </QuickButton>
          ))}
        </QuickBar>
        <DocTitle>Sestava-celek *</DocTitle>
        <SearchBox>
          <Icon n="prompt" s={11} />
          <SearchInput aria-label="Hledat" value={query} onChange={(e) => setQuery(e.target.value)} />
          <Icon n="lens" s={10} />
          <Caret c="#777" />
        </SearchBox>
        <WindowButtons>
          <QuickButton $w={24} aria-label="Přihlásit"><Icon n="user" /></QuickButton>
          <QuickButton $w={24} aria-label="Nápověda"><Icon n="help" /></QuickButton>
          <QuickButton $w={24} aria-label="Minimalizovat"><Icon n="min" s={11} /></QuickButton>
          <QuickButton $w={24} aria-label="Maximalizovat"><Icon n="max" s={13} /></QuickButton>
          <QuickButton $w={22} aria-label="Zavřít okno"><Icon n="close" s={12} /></QuickButton>
        </WindowButtons>
      </TitleBar>

      <Ribbon>
        {tools.map((t) => (
          <Tool key={t.t} $w={t.w} $sep={t.sep} $on={t.on} $off={t.off} $menu={t.menu} disabled={t.off}>
            <Icon n={t.n} />
            <ToolLabel>{t.t}</ToolLabel>
            {t.menu && <ToolCaret><Caret /></ToolCaret>}
          </Tool>
        ))}
      </Ribbon>

      <Workspace>
        <RibbonTabs>
          {ribbonTabs.map(([t, w], i) => <RibbonTab key={t} $w={w} $on={i === 0}>{t}</RibbonTab>)}
        </RibbonTabs>
        <Panel>
          <Grip><Dot /></Grip>
          <PanelTabs>
            {['part', 'list', 'tree', 'target', 'bigBall'].map((n, i) => (
              <PanelTab key={n} $on={i === 0} aria-label={n}><Icon n={n} /></PanelTab>
            ))}
            <PanelMore aria-label="Další"><Chevron /></PanelMore>
          </PanelTabs>
          <FilterBox>
            <Icon n="filter" s={13} />
            <Caret />
            <input aria-label="Filtr" value={filter} onChange={(e) => setFilter(e.target.value)} />
          </FilterBox>
          <Tree>
            <TreeRow $root>
              <TreeItem><Icon n="part" s={12} />{'Sestava-celek  (Výchozí<Stav zobrazení-'}</TreeItem>
            </TreeRow>
            {treeRows.map((r) => (
              <TreeRow key={r.t}>
                <Twisty>{r.exp && <svg width="4" height="6" viewBox="0 0 4 6" aria-hidden="true"><path d="M.500.500L3.500 3L.500 5.500z" fill="#555" /></svg>}</Twisty>
                <TreeItem $on={r.on}><Icon n={r.n} s={13} />{r.t}</TreeItem>
              </TreeRow>
            ))}
          </Tree>
          <PanelScroll>
            <Chevron left />
            <Track><Thumb /></Track>
            <Chevron />
          </PanelScroll>
        </Panel>
        <Viewport>
          <Model />
          <Splitter><Dot /></Splitter>
          <HeadsUp>
            {hud.map(([n, label, gap]) => (
              <HudButton key={n} $gap={gap} aria-label={label}><Icon n={n} s={13} /></HudButton>
            ))}
          </HeadsUp>
          <DocButtons>
            {['dockL', 'dockR', 'minG', 'restore', 'closeG'].map((n) => (
              <QuickButton key={n} $w={17} aria-label={n}><Icon n={n} s={11} /></QuickButton>
            ))}
          </DocButtons>
          <TaskPane>
            {['home', 'books', 'folderG', 'palette', 'ball', 'list', 'sync'].map((n, i) => (
              <TaskTab key={n} $on={i === 4} aria-label={n}><Icon n={n} s={13} /></TaskTab>
            ))}
          </TaskPane>
        </Viewport>
      </Workspace>

      <SheetTabs>
        {['M4 4v8M12 4L6 8l6 4', 'M11 4L5 8l6 4', 'M5 4l6 4-6 4', 'M12 4v8M4 4l6 4-6 4'].map((d) => (
          <StepButton key={d} aria-label="Posun listů"><Svg s={8}><path d={d} stroke="#8c8c8c" strokeWidth="1.500" /></Svg></StepButton>
        ))}
        <SheetTab $w={38} $on>Model</SheetTab>
        <SheetTab $w={51}>3D pohledy</SheetTab>
        <SheetTab $w={83}>Pohybová studie 1</SheetTab>
      </SheetTabs>
      <StatusBar>
        <StatusText>SOLIDWORKS Premium 2020 SP3.0</StatusText>
        <StatusText $w={53}>Plně určená</StatusText>
        <StatusText $w={130}>Úprava Sestava</StatusText>
        <StatusText $w={33}>Vlastní</StatusText>
        <StatusText $w={23}><svg width="5" height="3" viewBox="0 0 5 3" aria-hidden="true"><path d="M.500 2.500h4L2.500.200z" fill="#333" /></svg></StatusText>
        <StatusText $w={25}><Icon n="tag" s={11} /></StatusText>
      </StatusBar>
    </Shell>
  );
}
